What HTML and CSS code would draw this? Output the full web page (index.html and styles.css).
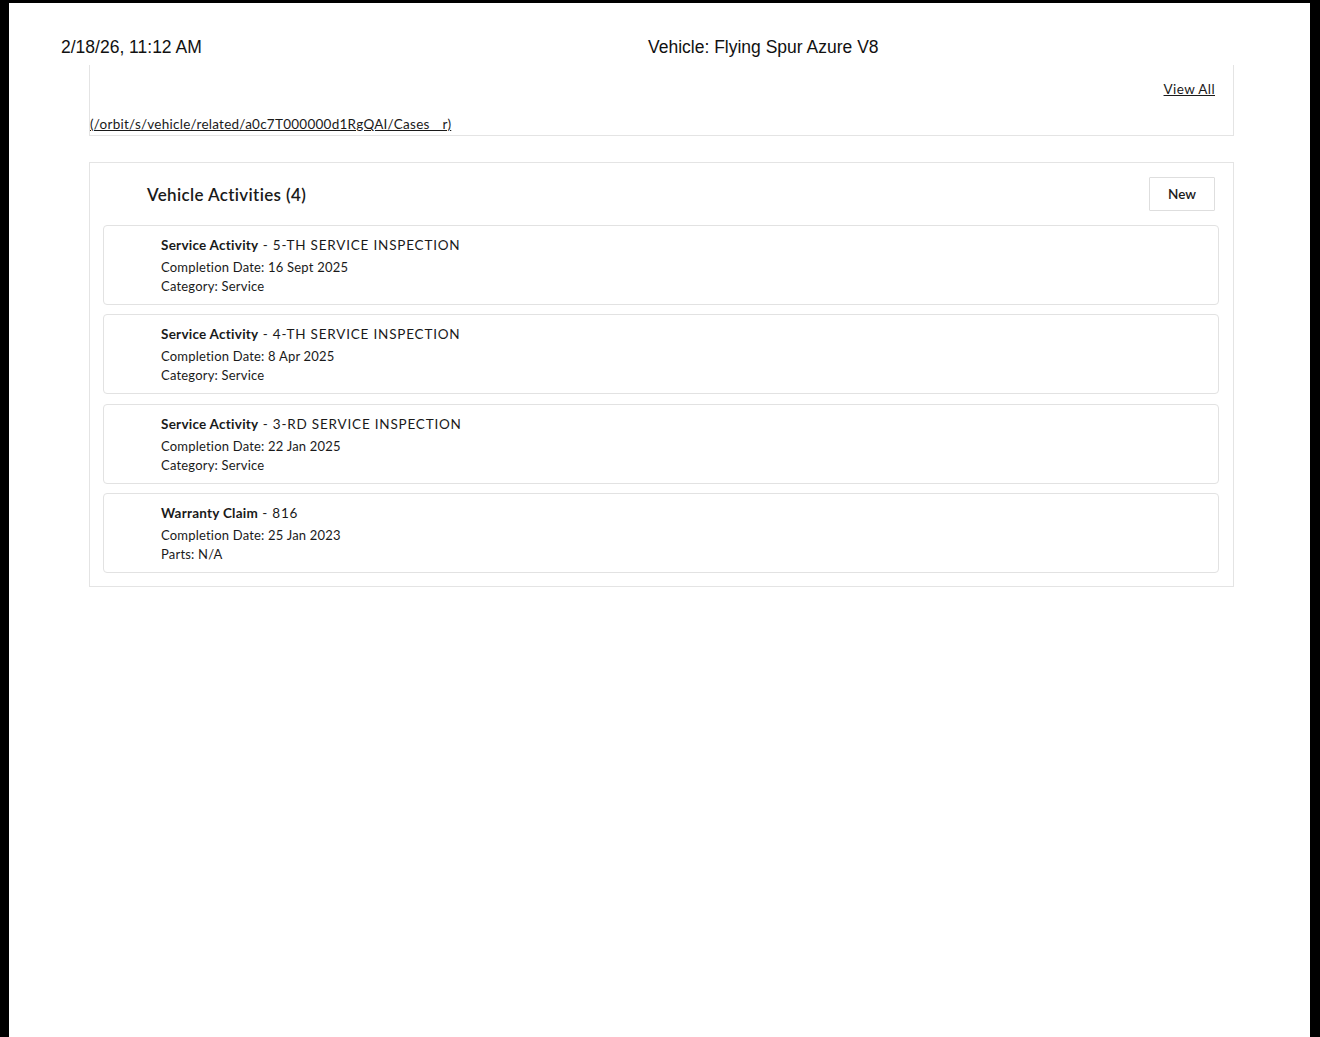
FILE: index.html
```html
<!DOCTYPE html>
<html>
<head>
<meta charset="utf-8">
<link rel="stylesheet" href="styles.css">
<title>Vehicle: Flying Spur Azure V8</title>
</head>
<body>
<div class="page">
  <header class="print-header">
    <span class="print-date">2/18/26, 11:12 AM</span>
    <span class="print-title">Vehicle: Flying Spur Azure V8</span>
  </header>

  <section class="card card-cases">
    <div class="cases-top">
      <a class="view-all" href="#">View All</a>
    </div>
    <a class="rel-link" href="#">(/orbit/s/vehicle/related/a0c7T000000d1RgQAI/Cases__r)</a>
  </section>

  <section class="card card-activities">
    <div class="card-head">
      <h2 class="card-title">Vehicle Activities (4)</h2>
      <button class="btn-new" type="button">New</button>
    </div>
    <ul class="activity-list">
      <li class="activity">
        <div class="act-title"><b>Service Activity</b> - 5-TH SERVICE INSPECTION</div>
        <div class="act-line">Completion Date: 16 Sept 2025</div>
        <div class="act-line">Category: Service</div>
      </li>
      <li class="activity">
        <div class="act-title"><b>Service Activity</b> - 4-TH SERVICE INSPECTION</div>
        <div class="act-line">Completion Date: 8 Apr 2025</div>
        <div class="act-line">Category: Service</div>
      </li>
      <li class="activity">
        <div class="act-title"><b>Service Activity</b> - 3-RD SERVICE INSPECTION</div>
        <div class="act-line">Completion Date: 22 Jan 2025</div>
        <div class="act-line">Category: Service</div>
      </li>
      <li class="activity">
        <div class="act-title"><b>Warranty Claim</b> - 816</div>
        <div class="act-line">Completion Date: 25 Jan 2023</div>
        <div class="act-line">Parts: N/A</div>
      </li>
    </ul>
  </section>
</div>
</body>
</html>
```

FILE: styles.css
```css
html, body {
  margin: 0;
  padding: 0;
  background: #000;
  height: 100%;
}

.page {
  margin: 3px 10px 0 9px;
  background: #fff;
  min-height: 1034px;
  box-sizing: border-box;
  padding-top: 1px;
  font-family: Lato, "Liberation Sans", sans-serif;
  color: #1a1a1a;
}

.print-header {
  position: relative;
  height: 61px;
  font-family: "Liberation Sans", Arial, sans-serif;
  font-size: 17.5px;
  color: #111;
}

.print-date {
  position: absolute;
  left: 52px;
  top: 33px;
}

.print-title {
  position: absolute;
  left: 639px;
  top: 33px;
}

.card {
  margin: 0 76px 0 80px;
  border: 1px solid #e4e4e4;
  background: #fff;
}

.card-cases {
  border-top: none;
  height: 71px;
  box-sizing: border-box;
  padding: 16px 18px 0 0;
  display: flex;
  flex-direction: column;
}

.cases-top {
  display: flex;
  justify-content: flex-end;
  height: 20px;
}

.view-all {
  color: #1a1a1a;
  font-size: 13.5px;
  letter-spacing: 0.4px;
  text-decoration: underline;
}

.rel-link {
  margin-top: 15px;
  color: #1a1a1a;
  font-size: 13.5px;
  letter-spacing: 0.25px;
  text-decoration: underline;
  align-self: flex-start;
}

.card-activities {
  margin-top: 26px;
  padding: 14px 14px 13px 13px;
}

.card-head {
  display: flex;
  align-items: center;
  justify-content: space-between;
  padding: 0 4px 0 44px;
  height: 34px;
}

.card-title {
  margin: 0;
  font-size: 17px;
  font-weight: 600;
  color: #1a1a1a;
  letter-spacing: 0.35px;
}

.btn-new {
  width: 66px;
  height: 34px;
  border: 1px solid #dedede;
  background: #fff;
  font-family: Lato, "Liberation Sans", sans-serif;
  font-size: 13.5px;
  font-weight: 600;
  color: #1a1a1a;
  border-radius: 1px;
}

.activity-list {
  list-style: none;
  margin: 14px 0 0 0;
  padding: 0;
  display: flex;
  flex-direction: column;
  gap: 9.33px;
}

.activity {
  border: 1px solid #e2e2e2;
  border-radius: 4px;
  padding: 10px 12px 8px 57px;
  height: 80px;
  box-sizing: border-box;
  font-size: 13px;
  color: #1a1a1a;
}

.act-title {
  font-size: 13.5px;
  line-height: 18px;
  letter-spacing: 0.8px;
}

.act-title b {
  font-weight: 700;
  letter-spacing: 0.25px;
}

.act-line {
  line-height: 19px;
  margin-top: 4px;
  letter-spacing: 0.2px;
}

.act-line + .act-line {
  margin-top: 0;
}
```
